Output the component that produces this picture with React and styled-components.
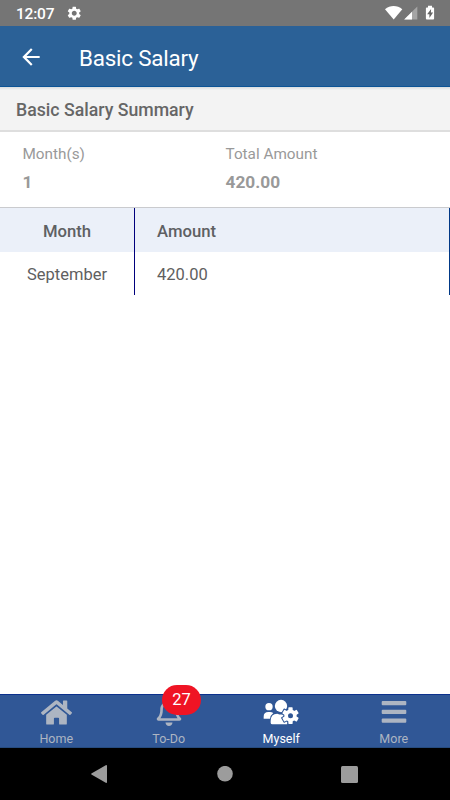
import React from "react";
import styled, { createGlobalStyle } from "styled-components";
import { FaHome, FaRegBell } from "react-icons/fa";
import { MdArrowBack, MdSettings } from "react-icons/md";

const GlobalStyle = createGlobalStyle`
  * { box-sizing: border-box; }
  body { margin: 0; background: #fff; }
  svg { display: block; flex: none; }
`;

const Screen = styled.div`
  width: 450px;
  height: 800px;
  display: flex;
  flex-direction: column;
  overflow: hidden;
  background: #fff;
  font-family: Roboto, sans-serif;
`;

const StatusBar = styled.div`
  height: 26px;
  flex: none;
  display: flex;
  align-items: center;
  padding: 0 15px 0 16px;
  background: #757575;
  color: #fff;
`;

const Clock = styled.span`
  width: 50px;
  padding-top: 1px;
  font-size: 15.5px;
  font-weight: 500;
  letter-spacing: -0.2px;
  line-height: 20px;
  white-space: nowrap;
`;

const StatusIcons = styled.div`
  margin-left: auto;
`;

const AppBar = styled.header`
  height: 61px;
  flex: none;
  display: flex;
  align-items: center;
  padding: 1px 18px 0;
  background: #2b6197;
  border-bottom: 1px solid #0c5496;
  color: #fff;
`;

const Title = styled.h1`
  margin: 2px 0 0 35px;
  font-size: 22.4px;
  font-weight: 400;
  letter-spacing: -0.2px;
  line-height: 28px;
  white-space: nowrap;
`;

const SectionTitle = styled.h2`
  height: 45px;
  flex: none;
  margin: 0;
  padding-left: 16px;
  border-bottom: 2px solid #dedede;
  background: linear-gradient(#d9dcdf, #f3f3f3 3px);
  color: #666;
  font-size: 17.7px;
  font-weight: 500;
  line-height: 47px;
`;

const Summary = styled.section`
  height: 76px;
  flex: none;
  display: grid;
  grid-template-columns: 203px 1fr;
  padding: 12px 0 0 22.5px;
  border-bottom: 1px solid #cacbce;
  color: #999;
`;

const Label = styled.div`
  font-size: 15.3px;
  line-height: 20px;
`;

const Value = styled.div`
  margin-top: 8px;
  font-size: 17.3px;
  font-weight: 700;
  line-height: 20px;
`;

const Table = styled.div`
  flex: none;
  display: grid;
  grid-template-columns: 135px 1fr;
`;

const Cell = styled.div`
  height: ${(p) => (p.$head ? 44 : 43)}px;
  display: flex;
  align-items: center;
  justify-content: ${(p) => (p.$center ? "center" : "flex-start")};
  padding: ${(p) => (p.$center ? "2px 0 0" : "2px 0 0 22px")};
  border-right: 1px solid ${(p) => (p.$center ? "#00007c" : "#003886")};
  background: ${(p) => (p.$head ? "#ebf0f9" : "#fff")};
  color: ${(p) => (p.$head ? "#5e6063" : "#606060")};
  font-size: ${(p) => (p.$head ? 16.7 : 16.5)}px;
  font-weight: ${(p) => (p.$head ? 500 : 400)};
`;

const TabBar = styled.nav`
  height: 54px;
  flex: none;
  margin-top: auto;
  display: grid;
  grid-template-columns: repeat(4, 1fr);
  background: #305796;
  border-top: 1px solid #0c318d;
  border-bottom: 1px solid #264b7e;
`;

const Tab = styled.div`
  position: relative;
  display: flex;
  flex-direction: column;
  align-items: center;
  color: ${(p) => (p.$active ? "#fff" : "#adb5c2")};
`;

const IconSlot = styled.div`
  height: 34px;
  display: flex;
  align-items: center;
`;

const TabLabel = styled.span`
  margin-top: 2px;
  font-size: 12.5px;
  line-height: 16px;
`;

const Badge = styled.span`
  position: absolute;
  left: 49.5px;
  top: -10px;
  width: 39px;
  height: 30px;
  border-radius: 15px;
  background: #ef1424;
  color: #fff;
  font-size: 16.5px;
  line-height: 29px;
  text-align: center;
`;

const SystemNav = styled.div`
  height: 52px;
  flex: none;
  display: flex;
  justify-content: space-between;
  align-items: center;
  padding: 0 92px 0 91px;
  background: #000;
  color: #9c9c9c;
`;

const SignalIcons = () => (
  <svg width="50" height="18" viewBox="0 0 50 18" fill="#fff">
    <path d="M0 5.2C5.2.9 12.1.9 17.3 5.2L8.7 15.4Z" />
    <path d="M32.3 2.4V15.5H19.2Z" opacity=".35" />
    <path d="M27 7.7V15.5H19.2Z" />
    <path d="M43 1.8h4v1.6h1.2q.9 0 .9.9v10.3q0 .9-.9.9h-6.4q-.9 0-.9-.9V4.3q0-.9.9-.9H43Z" />
    <path d="m46.1 4.9-4 5.4h2.3v3.6l3.7-5.3h-2.2Z" fill="#666" />
  </svg>
);

const TEETH = [0, 60, 120, 180, 240, 300];

const Gear = ({ grow = 0, fill }) => (
  <g transform="translate(197.5 106)" fill={fill}>
    <circle r={18.5 + grow} />
    {TEETH.map((angle) => (
      <rect
        key={angle}
        x={-6.5 - grow}
        y={-25 - grow}
        width={13 + grow * 2}
        height={14}
        rx="2"
        transform={`rotate(${angle})`}
      />
    ))}
  </g>
);

const PeopleGearIcon = () => (
  <svg width="36" height="26" viewBox="115 56 108 78" fill="#fff">
    <circle cx="133" cy="79" r="11" />
    <circle cx="169" cy="77" r="18.5" />
    <path d="M117 115v-6q0-14 14-14h5q5 0 10 3-9 7-10 17Z" />
    <path d="M143 132q-5 0-5-5v-5q0-22 20-22 12 5 24 0 8 0 10 9l-4 23Z" />
    <Gear grow={3} fill="#305796" />
    <Gear fill="#fff" />
    <circle cx="197.5" cy="106" r="7.5" fill="#305796" />
  </svg>
);

const MenuIcon = () => (
  <svg width="26" height="24" viewBox="0 0 26 24" fill="currentColor">
    <rect x=".7" y="1" width="24.6" height="4.2" rx="1" />
    <rect x=".7" y="9.8" width="24.6" height="4.2" rx="1" />
    <rect x=".7" y="18.4" width="24.6" height="4.4" rx="1" />
  </svg>
);

export default function App() {
  return (
    <Screen>
      <GlobalStyle />
      <StatusBar>
        <Clock>12:07</Clock>
        <MdSettings size={16.5} />
        <StatusIcons><SignalIcons /></StatusIcons>
      </StatusBar>
      <AppBar>
        <MdArrowBack size={26} />
        <Title>Basic Salary</Title>
      </AppBar>
      <SectionTitle>Basic Salary Summary</SectionTitle>
      <Summary>
        <div>
          <Label>Month(s)</Label>
          <Value>1</Value>
        </div>
        <div>
          <Label>Total Amount</Label>
          <Value>420.00</Value>
        </div>
      </Summary>
      <Table>
        <Cell $head $center>Month</Cell>
        <Cell $head>Amount</Cell>
        <Cell $center>September</Cell>
        <Cell>420.00</Cell>
      </Table>
      <TabBar>
        <Tab>
          <IconSlot><FaHome size={31} /></IconSlot>
          <TabLabel>Home</TabLabel>
        </Tab>
        <Tab>
          <IconSlot><FaRegBell size={28} /></IconSlot>
          <TabLabel>To-Do</TabLabel>
          <Badge>27</Badge>
        </Tab>
        <Tab $active>
          <IconSlot><PeopleGearIcon /></IconSlot>
          <TabLabel>Myself</TabLabel>
        </Tab>
        <Tab>
          <IconSlot><MenuIcon /></IconSlot>
          <TabLabel>More</TabLabel>
        </Tab>
      </TabBar>
      <SystemNav>
        <svg width="16" height="18" viewBox="0 0 16 18" fill="currentColor">
          <path d="M15.2 0q.8 0 .8.8v16.4q0 .8-.8.8L.4 9.5Q0 9 .4 8.5Z" />
        </svg>
        <svg width="17" height="16" viewBox="0 0 17 16" fill="currentColor">
          <circle cx="9" cy="7.7" r="7.8" />
        </svg>
        <svg width="17" height="17" viewBox="0 0 17 17" fill="currentColor">
          <rect width="17" height="17" rx="1.5" />
        </svg>
      </SystemNav>
    </Screen>
  );
}
